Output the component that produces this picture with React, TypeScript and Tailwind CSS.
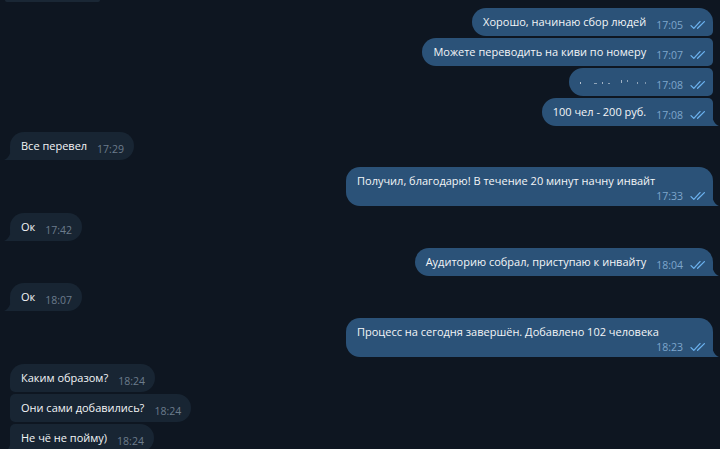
type Side = "in" | "out";
type Pos = "single" | "first" | "middle" | "last";

interface Message {
  id: number;
  side: Side;
  text: string;
  time: string;
  pos: Pos;
  wide?: boolean;
  hidden?: boolean;
}

const messages: Message[] = [
  { id: 1, side: "out", text: "Хорошо, начинаю сбор людей", time: "17:05", pos: "first" },
  { id: 2, side: "out", text: "Можете переводить на киви по номеру", time: "17:07", pos: "middle" },
  { id: 3, side: "out", text: "", time: "17:08", pos: "middle", hidden: true },
  { id: 4, side: "out", text: "100 чел - 200 руб.", time: "17:08", pos: "last" },
  { id: 5, side: "in", text: "Все перевел", time: "17:29", pos: "single" },
  {
    id: 6,
    side: "out",
    text: "Получил, благодарю! В течение 20 минут начну инвайт",
    time: "17:33",
    pos: "single",
    wide: true,
  },
  { id: 7, side: "in", text: "Ок", time: "17:42", pos: "single" },
  { id: 8, side: "out", text: "Аудиторию собрал, приступаю к инвайту", time: "18:04", pos: "single" },
  { id: 9, side: "in", text: "Ок", time: "18:07", pos: "single" },
  {
    id: 10,
    side: "out",
    text: "Процесс на сегодня завершён. Добавлено 102 человека",
    time: "18:23",
    pos: "single",
    wide: true,
  },
  { id: 11, side: "in", text: "Каким образом?", time: "18:24", pos: "first" },
  { id: 12, side: "in", text: "Они сами добавились?", time: "18:24", pos: "middle" },
  { id: 13, side: "in", text: "Не чё не пойму)", time: "18:24", pos: "last" },
];

const corners: Record<Side, Record<Pos, string>> = {
  out: {
    single: "rounded-[14px] rounded-br-none",
    first: "rounded-[14px] rounded-br-[5px]",
    middle: "rounded-l-[14px] rounded-r-[5px]",
    last: "rounded-l-[14px] rounded-tr-[5px] rounded-br-none",
  },
  in: {
    single: "rounded-[14px] rounded-bl-none",
    first: "rounded-[14px] rounded-bl-[5px]",
    middle: "rounded-r-[14px] rounded-l-[5px]",
    last: "rounded-r-[14px] rounded-tl-[5px] rounded-bl-none",
  },
};

function DoubleCheck() {
  return (
    <svg width="16" height="10" viewBox="0 0 16 10" fill="none" className="ml-[7px] mb-[1px]">
      <path d="M1 5.6L3.8 8.4L10 1.6" stroke="#6cb2ef" strokeWidth="1.3" strokeLinecap="round" strokeLinejoin="round" />
      <path d="M7.6 8.2L14.4 1.6" stroke="#6cb2ef" strokeWidth="1.3" strokeLinecap="round" />
    </svg>
  );
}

function Tail({ side }: { side: Side }) {
  if (side === "out") {
    return (
      <svg width="7" height="12" viewBox="0 0 7 12" className="absolute bottom-0 -right-[6px]">
        <path d="M0 0C0.5 6 2.5 10 7 12H0Z" fill="#2b5278" />
      </svg>
    );
  }
  return (
    <svg width="7" height="12" viewBox="0 0 7 12" className="absolute bottom-0 -left-[6px]">
      <path d="M7 0C6.5 6 4.5 10 0 12H7Z" fill="#182533" />
    </svg>
  );
}

// scattered specks left over where the phone number was smeared out
function Smudge() {
  return (
    <span className="flex items-center h-[18px] w-[66px] gap-[5px] opacity-80">
      <span className="w-[2px] h-[2px] bg-white/80 mt-[2px]" />
      <span className="w-[4px] h-[1px] bg-white/60 ml-[8px] mt-[3px]" />
      <span className="w-[3px] h-[2px] bg-white/70 mt-[2px]" />
      <span className="w-[2px] h-[1px] bg-white/60 mt-[3px]" />
      <span className="w-[2px] h-[3px] bg-white/70 ml-[6px] -mt-[2px]" />
      <span className="w-[2px] h-[2px] bg-white/60 -mt-[3px]" />
      <span className="w-[2px] h-[2px] bg-white/60 ml-[4px] mt-[2px]" />
      <span className="w-[2px] h-[2px] bg-white/50 ml-[2px] mt-[2px]" />
    </span>
  );
}

function Bubble({ m }: { m: Message }) {
  const out = m.side === "out";
  const withTail = m.pos === "single" || m.pos === "last";
  const time = (
    <span
      className={`flex items-center text-[10.5px] leading-[13px] ${out ? "text-[#7ea6cc]" : "text-[#6c7c8c]"}`}
    >
      {m.time}
      {out && <DoubleCheck />}
    </span>
  );

  return (
    <div
      className={`relative ${out ? "bg-[#2b5278] pr-[7px]" : "bg-[#182533] pr-[10px]"} ${corners[m.side][m.pos]} ${
        m.wide ? "w-[367px] flex flex-col pl-[11px] pt-[5px] pb-[3px]" : "flex items-end pl-[11px] py-[5px]"
      }`}
    >
      {m.hidden ? (
        <Smudge />
      ) : (
        <span className="text-[11px] leading-[18px] text-[#f3f5f7] whitespace-nowrap">{m.text}</span>
      )}
      {m.wide ? <div className="flex justify-end">{time}</div> : <div className="ml-[10px] mb-[-1px]">{time}</div>}
      {withTail && <Tail side={m.side} />}
    </div>
  );
}

export default function App() {
  return (
    <div
      className="h-[449px] w-[720px] overflow-hidden bg-[#0e1621] select-none"
      style={{ fontFamily: '"Open Sans", "Noto Sans", sans-serif' }}
    >
      <div className="h-[2px] w-[95px] ml-[5px] bg-[#1a2735] rounded-b-[4px]" />
      <div className="flex flex-col pt-[6px]">
        {messages.map((m, i) => {
          const prev = messages[i - 1];
          const gap = !prev ? "" : prev.side === m.side ? "mt-[2px]" : i === 4 ? "mt-[6px]" : "mt-[7px]";
          return (
            <div
              key={m.id}
              className={`flex ${m.side === "out" ? "justify-end pr-[7px]" : "justify-start pl-[10px]"} ${gap}`}
            >
              <Bubble m={m} />
            </div>
          );
        })}
      </div>
    </div>
  );
}
